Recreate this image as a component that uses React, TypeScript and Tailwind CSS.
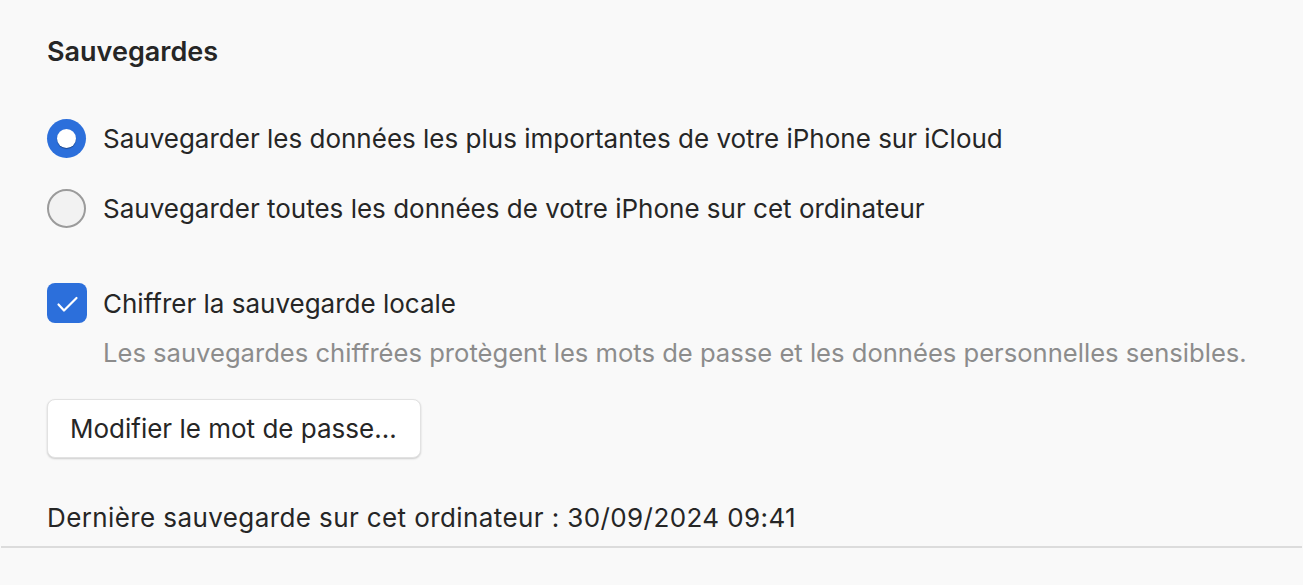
import React from 'react';

const font = { fontFamily: 'Inter, "Liberation Sans", Arial, sans-serif' };

const Radio: React.FC<{ checked?: boolean; label: string }> = ({ checked, label }) => (
  <div className="flex items-center h-[40px] gap-[17px]">
    {checked ? (
      <div className="w-[39px] h-[39px] rounded-full bg-[#2c6fdb] flex items-center justify-center">
        <div className="w-[19px] h-[19px] rounded-full bg-white shadow-[0_1px_1px_rgba(0,0,0,0.35)]" />
      </div>
    ) : (
      <div className="w-[39px] h-[39px] rounded-full bg-[#f2f2f2] border-2 border-[#9b9b9b]" />
    )}
    <span className="text-[26px] text-[#262626]">{label}</span>
  </div>
);

const App: React.FC = () => {
  return (
    <div className="w-[1303px] h-[585px] bg-[#f9f9f9] flex flex-col" style={font}>
      <div className="px-[47px] pt-[38px] flex flex-col">
        {/* Titre */}
        <h2 className="h-[28px] leading-[28px] text-[27px] font-semibold text-[#262626]">Sauvegardes</h2>

        {/* Options de sauvegarde */}
        <div className="mt-[52px] flex flex-col gap-[30px]">
          <Radio checked label="Sauvegarder les données les plus importantes de votre iPhone sur iCloud" />
          <Radio label="Sauvegarder toutes les données de votre iPhone sur cet ordinateur" />
        </div>

        {/* Chiffrement */}
        <div className="mt-[55px] flex items-center h-[40px] gap-[16px]">
          <div className="w-[40px] h-[40px] rounded-[8px] bg-[#2c6fdb]">
            <svg width="40" height="40" viewBox="0 0 40 40" fill="none">
              <path d="M11.5 21.5 L17 27.5 L29.5 15" stroke="white" strokeWidth="2.2" strokeLinecap="round" strokeLinejoin="round" />
            </svg>
          </div>
          <span className="text-[26px] text-[#262626]">Chiffrer la sauvegarde locale</span>
        </div>
        <p className="mt-[15px] pl-[56px] h-[30px] leading-[30px] text-[25.6px] text-[#8c8c8c]">
          Les sauvegardes chiffrées protègent les mots de passe et les données personnelles sensibles.
        </p>

        <button className="mt-[31px] self-start h-[59px] w-[374px] px-[22px] text-left rounded-[8px] bg-white border border-[#e2e2e2] shadow-[0_1px_2px_rgba(0,0,0,0.18)] text-[26px] text-[#262626]">
          Modifier le mot de passe...
        </button>

        <p className="mt-[45px] h-[30px] leading-[30px] text-[26px] tracking-[0.4px] text-[#262626]">
          Dernière sauvegarde sur cet ordinateur : 30/09/2024 09:41
        </p>
      </div>
      <div className="mt-[13px] mx-[1px] h-[2px] bg-[#dcdcdc]" />
    </div>
  );
};

export default App;
